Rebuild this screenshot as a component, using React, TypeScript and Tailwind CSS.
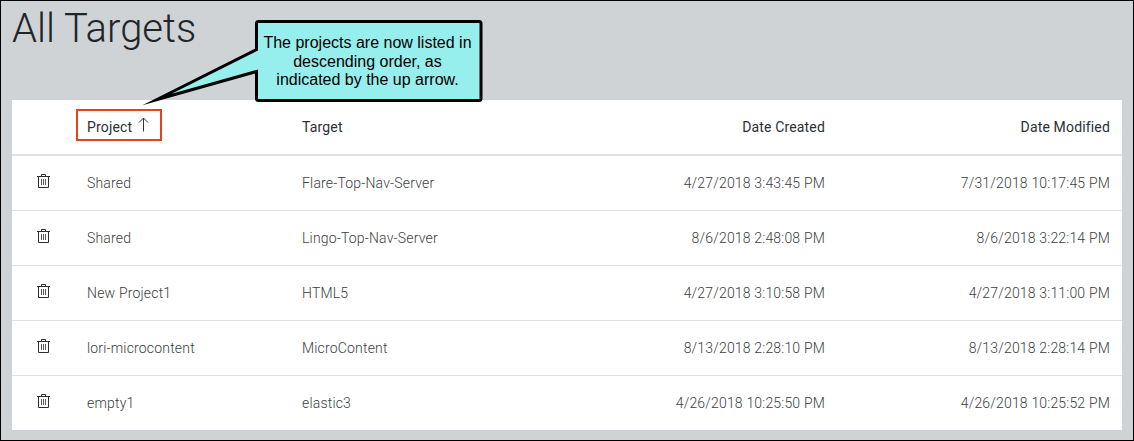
type Row = { project: string; target: string; created: string; modified: string };

const rows: Row[] = [
  { project: "Shared", target: "Flare-Top-Nav-Server", created: "4/27/2018 3:43:45 PM", modified: "7/31/2018 10:17:45 PM" },
  { project: "Shared", target: "Lingo-Top-Nav-Server", created: "8/6/2018 2:48:08 PM", modified: "8/6/2018 3:22:14 PM" },
  { project: "New Project1", target: "HTML5", created: "4/27/2018 3:10:58 PM", modified: "4/27/2018 3:11:00 PM" },
  { project: "lori-microcontent", target: "MicroContent", created: "8/13/2018 2:28:10 PM", modified: "8/13/2018 2:28:14 PM" },
  { project: "empty1", target: "elastic3", created: "4/26/2018 10:25:50 PM", modified: "4/26/2018 10:25:52 PM" },
];

function TrashIcon() {
  return (
    <svg className="block" width="13" height="15" viewBox="0 0 13 15" fill="none" strokeWidth="1">
      <path d="M0 3.5h13M4.5 3V1.5h4V3M1.5 3.5v11h10v-11" stroke="#2b2d30" />
      <path d="M4.5 6v6M6.5 6v6M8.5 6v6" stroke="#55585c" />
    </svg>
  );
}

function UpArrow() {
  return (
    <svg className="block" width="11" height="15" viewBox="0 0 11 15" fill="none" stroke="#303238" strokeWidth="1">
      <path d="M5.5 14.5V1M1 5.5L5.5 1L10 5.5" />
    </svg>
  );
}

function Callout() {
  return (
    <div className="absolute left-[140px] top-[18px] h-[88px] w-[344px]">
      <svg className="absolute inset-0" width="344" height="88" viewBox="0 0 344 88">
        <path
          d="M117.5 2.5H338Q340 2.5 340 4.5V79.5Q340 81.5 338 81.5H117.5Q115.5 81.5 115.5 79.500V52.5L16 80.5L115.5 30.5V4.5Q115.5 2.5 117.5 2.5Z"
          fill="#96efed"
          stroke="#000"
          strokeWidth="3"
          strokeMiterlimit="12"
        />
      </svg>
      <p className="relative ml-[114.5px] w-[224px] pt-[15px] text-center font-['Liberation_Sans',Arial,sans-serif] text-[16px] leading-[18.5px] text-black">
        The projects are now listed in
        <br />
        descending order, as
        <br />
        indicated by the up arrow.
      </p>
    </div>
  );
}

const columns = "grid grid-cols-[75px_215px_238px_285px_285px] items-center";

export default function App() {
  return (
    <div className="relative h-[441px] w-[1134px] overflow-hidden border border-black bg-[#cfd3d6] px-[11px] font-[Roboto,sans-serif] text-sm">
      <h1 className="h-[99px] pt-[4px] text-[40px] font-light leading-[48px] text-[#212529]">All Targets</h1>
      <div className="h-[330px] w-[1110px] bg-white">
        <div className={columns + " h-[56px] border-b-2 border-[#dee2e6] tracking-[0.16px] text-[#2b2f34]"}>
          <span />
          <div className="-mt-[4px] -ml-[11px] flex h-8 w-[86px] items-center border-2 border-[#e8421c] pl-[9px]">
            <span className="pt-[4px]">Project</span>
            <span className="-mt-[1px] ml-[6px]">
              <UpArrow />
            </span>
          </div>
          <span>Target</span>
          <span className="text-right">Date Created</span>
          <span className="text-right">Date Modified</span>
        </div>
        {rows.map((r) => (
          <div
            key={r.modified}
            className={columns + " h-[55px] border-b border-[#dee2e6] font-light tracking-[0.18px] text-[#3b3d40] last:h-[54px] last:border-b-0"}
          >
            <span className="mb-[5px] pl-[25px]">
              <TrashIcon />
            </span>
            <span>{r.project}</span>
            <span>{r.target}</span>
            <span className="text-right">{r.created}</span>
            <span className="text-right">{r.modified}</span>
          </div>
        ))}
      </div>
      <Callout />
    </div>
  );
}
